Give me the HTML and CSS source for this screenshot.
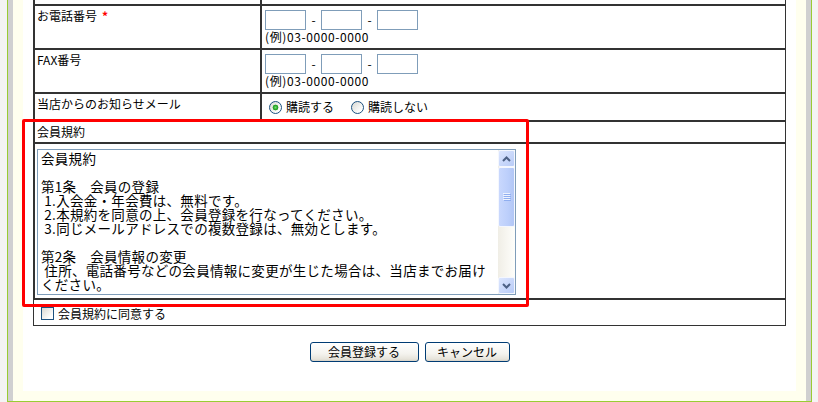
FILE: index.html
```html
<!DOCTYPE html>
<html lang="ja">
<head>
<meta charset="utf-8">
<title>会員登録</title>
<link rel="stylesheet" href="styles.css">
</head>
<body>
<div class="frame">
  <div class="frame-inner">
    <div class="content">
      <table class="form">
        <tr class="cut"><td class="label"></td><td class="field"></td></tr>
        <tr>
          <td class="label">お電話番号<span class="req">*</span></td>
          <td class="field">
            <div class="tel"><input type="text" class="box"><span class="dash">-</span><input type="text" class="box"><span class="dash">-</span><input type="text" class="box"></div>
            <div class="example">(例)03-0000-0000</div>
          </td>
        </tr>
        <tr>
          <td class="label">FAX番号</td>
          <td class="field">
            <div class="tel"><input type="text" class="box"><span class="dash">-</span><input type="text" class="box"><span class="dash">-</span><input type="text" class="box"></div>
            <div class="example">(例)03-0000-0000</div>
          </td>
        </tr>
        <tr>
          <td class="label">当店からのお知らせメール</td>
          <td class="field radio-cell">
            <div class="radios">
              <label class="opt"><input type="radio" name="mail" class="radio" checked><span>購読する</span></label>
              <label class="opt opt2"><input type="radio" name="mail" class="radio"><span>購読しない</span></label>
            </div>
          </td>
        </tr>
        <tr>
          <td class="head" colspan="2">会員規約</td>
        </tr>
        <tr>
          <td class="terms-cell" colspan="2">
            <div class="terms-box">
              <textarea class="terms" readonly>会員規約

第1条　会員の登録
 1.入会金・年会費は、無料です。
 2.本規約を同意の上、会員登録を行なってください。
 3.同じメールアドレスでの複数登録は、無効とします。

第2条　会員情報の変更
 住所、電話番号などの会員情報に変更が生じた場合は、当店までお届けください。

第3条　退会
 退会を希望される場合は、当店までご連絡ください。</textarea>
              <div class="vscroll" aria-hidden="true">
                <span class="sb-btn"><svg width="9" height="6" viewBox="0 0 9 6"><path d="M1 5 L4.5 1.5 L8 5" fill="none" stroke="#4d6185" stroke-width="2"/></svg></span>
                <span class="sb-thumb"><svg width="8" height="8" viewBox="0 0 8 8"><path d="M0 0.5H7M0 2.5H7M0 4.5H7M0 6.5H7" stroke="#eef3fe" stroke-width="1"/><path d="M1 1.5H8M1 3.5H8M1 5.5H8M1 7.5H8" stroke="#8faef0" stroke-width="1"/></svg></span>
                <span class="sb-track"></span>
                <span class="sb-btn"><svg width="9" height="6" viewBox="0 0 9 6"><path d="M1 1 L4.5 4.5 L8 1" fill="none" stroke="#4d6185" stroke-width="2"/></svg></span>
              </div>
            </div>
          </td>
        </tr>
        <tr>
          <td class="agree-cell" colspan="2">
            <label class="agree"><input type="checkbox" class="check"><span>会員規約に同意する</span></label>
          </td>
        </tr>
      </table>
      <div class="actions">
        <button type="button" class="btn btn-submit">会員登録する</button>
        <button type="button" class="btn btn-cancel">キャンセル</button>
      </div>
      <div class="highlight" aria-hidden="true"></div>
    </div>
  </div>
</div>
</body>
</html>
```

FILE: styles.css
```css
* {
  box-sizing: border-box;
}

html,
body {
  margin: 0;
  padding: 0;
}

body {
  width: 818px;
  height: 402px;
  overflow: hidden;
  background: #f4f4f4;
  font-family: "Noto Sans CJK JP", sans-serif;
  font-size: 12px;
  color: #000;
}

.frame {
  margin-left: 7px;
  width: 805px;
  border: 1px solid #99cc33;
  border-top: none;
}

.frame-inner {
  border-left: 5px solid #d0d0d0;
  border-right: 5px solid #d0d0d0;
  background: #ffffee;
  padding: 0 10px 10px;
}

.content {
  position: relative;
  background: #fff;
  padding: 0 10px 29px;
}

.form {
  width: 753px;
  table-layout: fixed;
  border-collapse: separate;
  border-spacing: 0;
  border: 1px solid #333;
  border-top: none;
}

.form td {
  padding: 0;
  vertical-align: top;
  border: 1px solid #333;
  border-right: none;
  line-height: 14px;
}

.form td.label {
  width: 225px;
  border-right: 1px solid #333;
  padding: 3px 2px 0;
}

.form td.field {
  padding: 4px 0 4px 3px;
}

.form tr.cut td {
  box-sizing: content-box;
  height: 4px;
  padding: 0;
  border-top: none;
  line-height: 0;
  font-size: 0;
}

.req {
  color: #ff0000;
  font-weight: bold;
  margin-left: 5px;
}

.tel {
  display: flex;
  align-items: center;
  height: 20px;
}

.box {
  width: 41px;
  height: 20px;
  margin: 0;
  padding: 0 2px;
  border: 1px solid #7f9db9;
  background: #fff;
  font-family: "Noto Sans CJK JP", sans-serif;
  font-size: 12px;
}

.dash {
  width: 15px;
  text-align: center;
  line-height: 14px;
}

.example {
  line-height: 14px;
  height: 14px;
  letter-spacing: 0.6px;
}

.form td.radio-cell {
  padding: 0;
}

.radios {
  display: flex;
  align-items: center;
  height: 26px;
  padding-left: 7px;
}

.opt {
  display: flex;
  align-items: center;
  gap: 4px;
}

.opt2 {
  margin-left: 17px;
}

.radio {
  -webkit-appearance: none;
  appearance: none;
  width: 13px;
  height: 13px;
  margin: 0;
  border: 1px solid #1c5180;
  border-radius: 50%;
  background: linear-gradient(135deg, #d8d8d2, #ffffff 80%);
}

.radio:checked {
  background: radial-gradient(circle at 50% 50%, #6fdc6f 0, #2aa52a 2px, #21a121 2.6px, transparent 3.2px),
    linear-gradient(135deg, #d8d8d2, #ffffff 80%);
}

.form td.head {
  padding: 3px 2px;
}

.form td.terms-cell {
  padding: 5px 0 3px 2px;
}

.terms-box {
  display: flex;
  width: 479px;
  height: 146px;
  border: 1px solid #7f9db9;
  background: #fff;
}

.terms {
  flex: 1;
  display: block;
  height: 144px;
  margin: 0;
  padding: 1px 8px 0 3px;
  border: none;
  outline: none;
  resize: none;
  overflow: hidden;
  background: #fff;
  color: #000;
  font-family: "Noto Sans CJK JP", sans-serif;
  font-size: 13.5px;
  letter-spacing: 0.3px;
  line-height: 14px;
}

.vscroll {
  width: 17px;
  display: flex;
  flex-direction: column;
  background: linear-gradient(to right, #f0eee6, #fefefb);
}

.sb-btn,
.sb-thumb {
  display: flex;
  align-items: center;
  justify-content: center;
  border: 1px solid #f4f7fe;
  border-radius: 2px;
  background: linear-gradient(135deg, #dce6fe, #b8cbf7);
}

.sb-btn {
  height: 17px;
}

.sb-thumb {
  height: 60px;
  background: linear-gradient(to right, #c9d8fd, #bccffb 60%, #b2c6f5);
}

.sb-track {
  flex: 1;
}

.form td.agree-cell {
  border-left: none;
  border-bottom: none;
  padding: 7px 0 5px 7px;
}

.agree {
  display: flex;
  align-items: center;
  gap: 4px;
  height: 13px;
}

.check {
  -webkit-appearance: none;
  appearance: none;
  width: 13px;
  height: 13px;
  margin: 0;
  border: 1px solid #1c5180;
  background: linear-gradient(135deg, #d8d8d2, #ffffff 80%);
}

.actions {
  display: flex;
  justify-content: center;
  gap: 6px;
  margin-top: 16px;
}

.btn {
  height: 20px;
  padding: 0;
  margin: 0;
  border: 1px solid #003c74;
  border-radius: 3px;
  background: linear-gradient(to bottom, #ffffff 0%, #f4f3ee 60%, #e6e3da 90%, #d6d0c5 100%);
  color: #000;
  font-family: "Noto Sans CJK JP", sans-serif;
  font-size: 12px;
  line-height: 18px;
}

.btn-submit {
  width: 109px;
}

.btn-cancel {
  width: 85px;
}

.highlight {
  position: absolute;
  left: -1px;
  top: 119px;
  width: 507px;
  height: 188px;
  border: 3px solid #ff0000;
  border-radius: 2px;
  pointer-events: none;
}
```
